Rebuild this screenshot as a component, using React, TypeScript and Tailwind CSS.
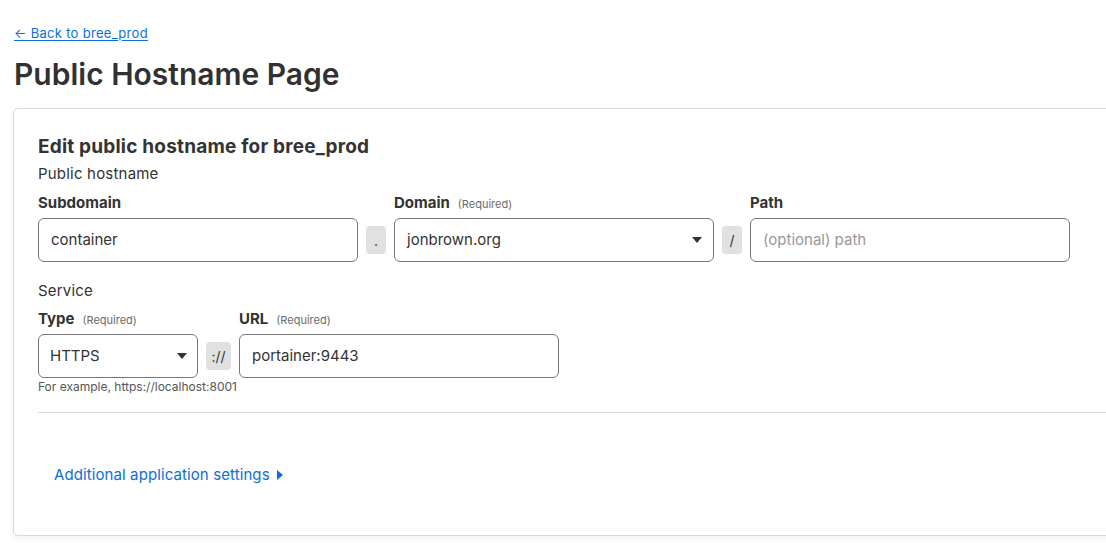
function Label({ text, required }: { text: string; required?: boolean }) {
  return (
    <div className="flex items-baseline gap-2 h-[22px] mb-[4px]">
      <span className="text-[15px] font-bold text-[#333]">{text}</span>
      {required && <span className="text-[11px] text-[#6b6b6b]">(Required)</span>}
    </div>
  );
}

function Caret() {
  return (
    <svg width="10" height="6" viewBox="0 0 10 6" className="text-[#333]">
      <path d="M0 0h10L5 6z" fill="currentColor" />
    </svg>
  );
}

function Sep({ text, w }: { text: string; w: string }) {
  return (
    <div className={`${w} h-[28px] mx-2 rounded-[4px] bg-[#e1e1e1] flex items-center justify-center text-[14px] text-[#333] shrink-0`}>
      {text}
    </div>
  );
}

export default function App() {
  return (
    <div className="w-[1106px] h-[555px] overflow-hidden bg-white font-['Inter',sans-serif] text-[#333]">
      <div className="pl-[14px] pt-[20px]">
        <a href="#" className="text-[13px] tracking-[0.3px] text-[#0b6ee0] underline underline-offset-2">
          ← Back to bree_prod
        </a>
        <h1 className="mt-[12px] text-[30px] font-semibold tracking-[0px] leading-[36px] text-[#313131]">
          Public Hostname Page
        </h1>
      </div>

      <div className="ml-[13px] mt-[16px] w-[1120px] h-[428px] border border-[#d9d9d9] rounded-[5px] bg-white shadow-[0_3px_6px_rgba(0,0,0,0.05)] pl-[24px] pt-[25px]">
        <h2 className="text-[19px] font-bold tracking-[0.2px] leading-[26px] text-[#333]">Edit public hostname for bree_prod</h2>
        <div className="text-[15px] leading-[22px] tracking-[0.2px] mt-[3px] mb-[7px]">Public hostname</div>

        <div className="flex items-end">
          <div>
            <Label text="Subdomain" />
            <div className="w-[320px] h-[44px] border border-[#777] rounded-[6px] flex items-center px-3 text-[15px]">
              container
            </div>
          </div>
          <div className="h-[44px] flex items-center">
            <Sep text="." w="w-[20px]" />
          </div>
          <div>
            <Label text="Domain" required />
            <div className="w-[320px] h-[44px] border border-[#777] rounded-[6px] flex items-center justify-between pl-3 pr-[11px] text-[15px]">
              <span>jonbrown.org</span>
              <Caret />
            </div>
          </div>
          <div className="h-[44px] flex items-center">
            <Sep text="/" w="w-[20px]" />
          </div>
          <div>
            <Label text="Path" />
            <div className="w-[320px] h-[44px] border border-[#777] rounded-[6px] flex items-center px-3 text-[15px] text-[#999]">
              (optional) path
            </div>
          </div>
        </div>

        <div className="text-[15px] leading-[22px] tracking-[0.2px] mt-[18px] mb-[6px]">Service</div>
        <div className="flex items-end">
          <div>
            <Label text="Type" required />
            <div className="w-[160px] h-[44px] border border-[#777] rounded-[6px] flex items-center justify-between pl-[11px] pr-[10px] text-[15px]">
              <span>HTTPS</span>
              <Caret />
            </div>
          </div>
          <div className="h-[44px] flex items-center">
            <Sep text="://" w="w-[25px]" />
          </div>
          <div>
            <Label text="URL" required />
            <div className="w-[320px] h-[44px] border border-[#777] rounded-[6px] flex items-center px-3 text-[15px]">
              portainer:9443
            </div>
          </div>
        </div>
        <div className="text-[12px] text-[#555] mt-[2px] leading-[14px]">For example, https://localhost:8001</div>

        <div className="border-t border-[#d9d9d9] mt-[18px]" />

        <div className="mt-[51px] ml-[16px] flex items-center gap-[7px] text-[15px] tracking-[0.1px] text-[#0b6ee0]">
          <span>Additional application settings</span>
          <svg width="6" height="10" viewBox="0 0 6 10">
            <path d="M0 0l6 5-6 5z" fill="currentColor" />
          </svg>
        </div>
      </div>
    </div>
  );
}
